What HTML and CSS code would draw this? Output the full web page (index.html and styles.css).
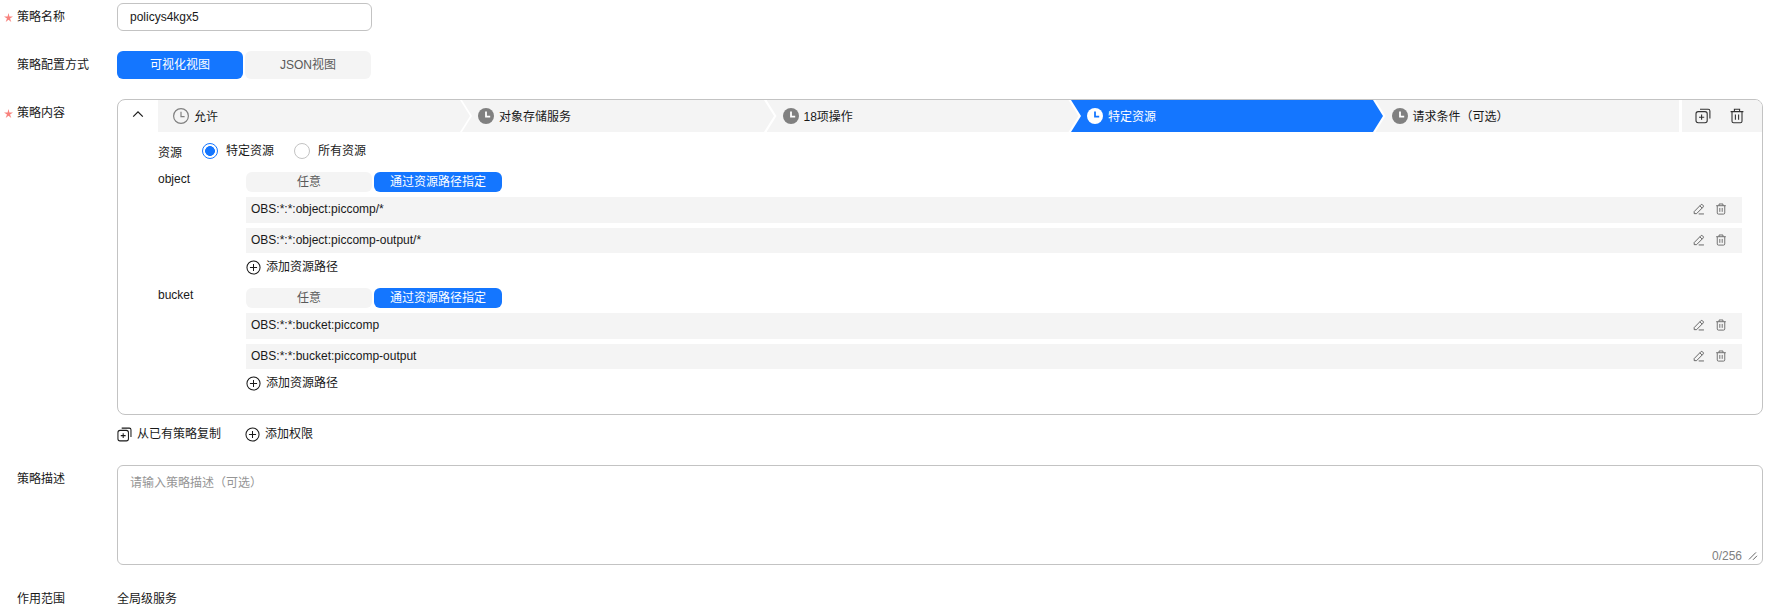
FILE: index.html
```html
<!DOCTYPE html>
<html lang="zh-CN">
<head>
<meta charset="utf-8">
<title>策略</title>
<link rel="stylesheet" href="styles.css">
</head>
<body>
<svg class="defs" width="0" height="0" aria-hidden="true">
  <symbol id="clock-solid" viewBox="0 0 16 16"><circle cx="8" cy="8" r="8" fill="currentColor"/><path d="M8 3.6V8.6H12.2" fill="none" stroke="var(--clock-hand,#fff)" stroke-width="1.8"/></symbol>
  <symbol id="clock-line" viewBox="0 0 16 16"><circle cx="8" cy="8" r="7.4" fill="none" stroke="currentColor" stroke-width="1.2"/><path d="M8 3.8V8.6H11.6" fill="none" stroke="currentColor" stroke-width="1.2"/></symbol>
  <symbol id="copy" viewBox="0 0 16 16"><rect x="1" y="3.6" width="11.2" height="11.2" rx="2.2" fill="none" stroke="currentColor" stroke-width="1.1"/><path d="M6.6 6.6V11.8M4 9.2H9.2M5 1.2H13.2Q14.9 1.2 14.9 2.9V10.6" fill="none" stroke="currentColor" stroke-width="1.1"/></symbol>
  <symbol id="trash" viewBox="0 0 16 16"><path d="M1.6 3.6H14.4M5.4 3.4V1.3H10.6V3.4M3 3.8V13.2Q3 14.8 4.6 14.8H11.4Q13 14.8 13 13.2V3.8M6.4 6.6V11.8M9.6 6.6V11.8" fill="none" stroke="currentColor" stroke-width="1.1"/></symbol>
  <symbol id="pencil" viewBox="0 0 16 16"><path d="M1.6 11.4L10.4 2.4Q11.6 1.3 12.9 2.5L13.4 3Q14.5 4.3 13.4 5.5L4.8 14.2H1.6ZM9.2 3.8L12.2 6.8M7.6 14.6H14.6" fill="none" stroke="currentColor" stroke-width="1.2"/></symbol>
  <symbol id="plus" viewBox="0 0 16 16"><circle cx="8" cy="8" r="7" fill="none" stroke="currentColor" stroke-width="1.1"/><path d="M8 4.2V11.8M4.2 8H11.8" fill="none" stroke="currentColor" stroke-width="1.1"/></symbol>
  <symbol id="star" viewBox="0 0 10 10"><path d="M5 0L6 3.9H10L6.7 6.1L8.1 10L5 7.5L1.9 10L3.3 6.1L0 3.9H4Z" fill="currentColor"/></symbol>
</svg>

<form class="form">
  <div class="label"><svg class="star"><use href="#star"/></svg><span>策略名称</span></div>
  <div class="field"><div class="input">policys4kgx5</div></div>

  <div class="label label-plain"><span>策略配置方式</span></div>
  <div class="field">
    <div class="seg seg-large">
      <div class="seg-item seg-on">可视化视图</div>
      <div class="seg-item">JSON视图</div>
    </div>
  </div>

  <div class="label"><svg class="star"><use href="#star"/></svg><span>策略内容</span></div>
  <div class="field">
    <section class="panel">
      <header class="steps">
        <div class="collapse"><svg class="chev" viewBox="0 0 12 8"><path d="M1.2 6.6L6 1.8L10.8 6.6" fill="none" stroke="currentColor" stroke-width="1.2"/></svg></div>
        <div class="step step-first"><svg class="ic16 ic-gray"><use href="#clock-line"/></svg><span>允许</span></div>
        <div class="step"><svg class="ic16 ic-gray"><use href="#clock-solid"/></svg><span>对象存储服务</span></div>
        <div class="step"><svg class="ic16 ic-gray"><use href="#clock-solid"/></svg><span>18项操作</span></div>
        <div class="step step-on"><svg class="ic16 ic-white"><use href="#clock-solid"/></svg><span>特定资源</span></div>
        <div class="step step-last"><svg class="ic16 ic-gray"><use href="#clock-solid"/></svg><span>请求条件（可选）</span></div>
        <div class="step-actions">
          <svg class="ic16"><use href="#copy"/></svg>
          <svg class="ic16"><use href="#trash"/></svg>
        </div>
      </header>
      <div class="panel-body">
        <div class="radios">
          <span class="radios-title">资源</span>
          <span class="radio radio-on"></span><span class="radio-text">特定资源</span>
          <span class="radio"></span><span class="radio-text">所有资源</span>
        </div>

        <div class="res">
          <div class="res-name">object</div>
          <div class="res-main">
            <div class="seg seg-small">
              <div class="seg-item seg-any">任意</div>
              <div class="seg-item seg-on seg-path">通过资源路径指定</div>
            </div>
            <div class="path"><span>OBS:*:*:object:piccomp/*</span><span class="path-tools"><svg class="ic12"><use href="#pencil"/></svg><svg class="ic12"><use href="#trash"/></svg></span></div>
            <div class="path"><span>OBS:*:*:object:piccomp-output/*</span><span class="path-tools"><svg class="ic12"><use href="#pencil"/></svg><svg class="ic12"><use href="#trash"/></svg></span></div>
            <div class="add add-path"><svg class="ic15"><use href="#plus"/></svg><span>添加资源路径</span></div>
          </div>
        </div>

        <div class="res">
          <div class="res-name">bucket</div>
          <div class="res-main">
            <div class="seg seg-small">
              <div class="seg-item seg-any">任意</div>
              <div class="seg-item seg-on seg-path">通过资源路径指定</div>
            </div>
            <div class="path"><span>OBS:*:*:bucket:piccomp</span><span class="path-tools"><svg class="ic12"><use href="#pencil"/></svg><svg class="ic12"><use href="#trash"/></svg></span></div>
            <div class="path"><span>OBS:*:*:bucket:piccomp-output</span><span class="path-tools"><svg class="ic12"><use href="#pencil"/></svg><svg class="ic12"><use href="#trash"/></svg></span></div>
            <div class="add add-path"><svg class="ic15"><use href="#plus"/></svg><span>添加资源路径</span></div>
          </div>
        </div>
      </div>
    </section>
    <div class="panel-links">
      <div class="add link-copy"><svg class="ic15"><use href="#copy"/></svg><span>从已有策略复制</span></div>
      <div class="add"><svg class="ic15"><use href="#plus"/></svg><span>添加权限</span></div>
    </div>
  </div>

  <div class="label label-plain"><span>策略描述</span></div>
  <div class="field">
    <div class="textarea">
      <span class="placeholder">请输入策略描述（可选）</span>
      <span class="count">0/256</span>
      <svg class="grip" viewBox="0 0 10 10"><path d="M1 8.4L8 1.4M5 8.8L9 4.8" fill="none" stroke="currentColor" stroke-width="1"/></svg>
    </div>
  </div>

  <div class="label label-plain label-short"><span>作用范围</span></div>
  <div class="field field-text">全局级服务</div>
</form>
</body>
</html>
```

FILE: styles.css
```css
* { box-sizing: border-box; }
html, body { margin: 0; height: 100%; overflow: hidden; background: #fff; }
body {
  font-family: "Liberation Sans", "Noto Sans CJK SC", sans-serif;
  font-size: 12px;
  line-height: 20px;
  color: #191919;
}
.defs { position: absolute; }

.form {
  display: grid;
  grid-template-columns: 117px 1646px;
  row-gap: 20px;
  padding-top: 3px;
}
.label { display: flex; align-items: center; align-self: start; height: 28px; padding-left: 4px; gap: 4px; }
.label-plain { padding-left: 17px; }
.label-short { height: 20px; margin-top: 4px; }
.star { width: 9px; height: 9px; color: #f8827d; margin-top: 1px; }
.field-text { line-height: 20px; margin-top: 4px; }

.input {
  width: 255px; height: 28px; padding: 0 12px;
  border: 1px solid #c3c3c3; border-radius: 6px; line-height: 26px;
}

.seg { display: flex; gap: 2px; }
.seg-item { display: flex; align-items: center; justify-content: center; background: #f4f4f4; color: #595959; border-radius: 6px; }
.seg-on { background: #1476ff; color: #fff; }
.seg-large .seg-item { width: 126px; height: 28px; }
.seg-small .seg-item { height: 20px; }
.seg-any { width: 126px; }
.seg-path { width: 128px; }

.panel { height: 316px; border: 1px solid #c3c3c3; border-radius: 8px; overflow: hidden; }

.steps { display: flex; height: 32px; }
.collapse { flex: 0 0 40px; display: flex; align-items: center; justify-content: center; padding-right: 1px; }
.chev { width: 12px; height: 8px; margin-top: -4px; }
.step {
  flex: 0 0 312px;
  margin-right: -7.5px;
  display: flex; align-items: center; gap: 5px;
  padding-left: 16px;
  background: #f4f4f4;
  clip-path: polygon(0 0, calc(100% - 10px) 0, 100% 50%, calc(100% - 10px) 100%, 0 100%, 10px 50%);
}
.step span { padding-top: 1px; }
.step-first {
  margin-right: -8px;
  padding-left: 15px;
  clip-path: polygon(0 0, calc(100% - 10px) 0, 100% 50%, calc(100% - 10px) 100%, 0 100%);
}
.step-on { background: #1476ff; color: #fff; }
.step-last {
  flex: 0 0 303.5px; margin-right: 0;
  clip-path: polygon(0 0, 100% 0, 100% 100%, 0 100%, 10px 50%);
}
.step-actions {
  flex: 0 0 80px; margin-left: 3px;
  display: flex; align-items: center; gap: 18px; padding-left: 13px;
  background: #f4f4f4;
  color: #333;
}

.ic16 { width: 16px; height: 16px; flex: none; }
.ic15 { width: 15px; height: 15px; flex: none; }
.ic12 { width: 12px; height: 12px; flex: none; }
.ic-gray { color: #808080; }
.ic-white { color: #fff; --clock-hand: #1476ff; }

.panel-body { padding: 11px 20px 0 40px; }

.radios { display: flex; align-items: center; height: 16px; }
.radios-title { width: 44px; padding-top: 3px; }
.radio { width: 16px; height: 16px; border: 1px solid #c3c3c3; border-radius: 50%; flex: none; margin-right: 8px; }
.radio-text { width: 48px; margin-right: 20px; }
.radio-on { border-color: #1476ff; background: radial-gradient(circle, #1476ff 0 4.6px, #fff 5.2px); }

.res { display: flex; margin-top: 13px; }
.res + .res { margin-top: 11px; }
.res-name { flex: 0 0 88px; height: 14px; line-height: 14px; }
.res-main { flex: 1; display: flex; flex-direction: column; }

.path {
  display: flex; align-items: flex-start; justify-content: space-between;
  height: 25.5px; margin-top: 5px; padding: 2px 15px 0 5px;
  background: #f4f4f4;
}
.path-tools { display: flex; gap: 10px; color: #595959; margin-top: 4px; }

.add { display: flex; align-items: center; gap: 5px; height: 20px; }
.add-path { margin-top: 4px; }

.panel-links { display: flex; height: 21px; margin-top: 9px; }
.link-copy { width: 128px; }

.textarea {
  position: relative;
  height: 100px; padding: 7px 12px;
  border: 1px solid #c3c3c3; border-radius: 6px;
}
.placeholder { color: #959595; }
.count { position: absolute; right: 20px; bottom: -2px; color: #808080; }
.grip { position: absolute; right: 4px; bottom: 3px; width: 10px; height: 10px; color: #666; }
```
